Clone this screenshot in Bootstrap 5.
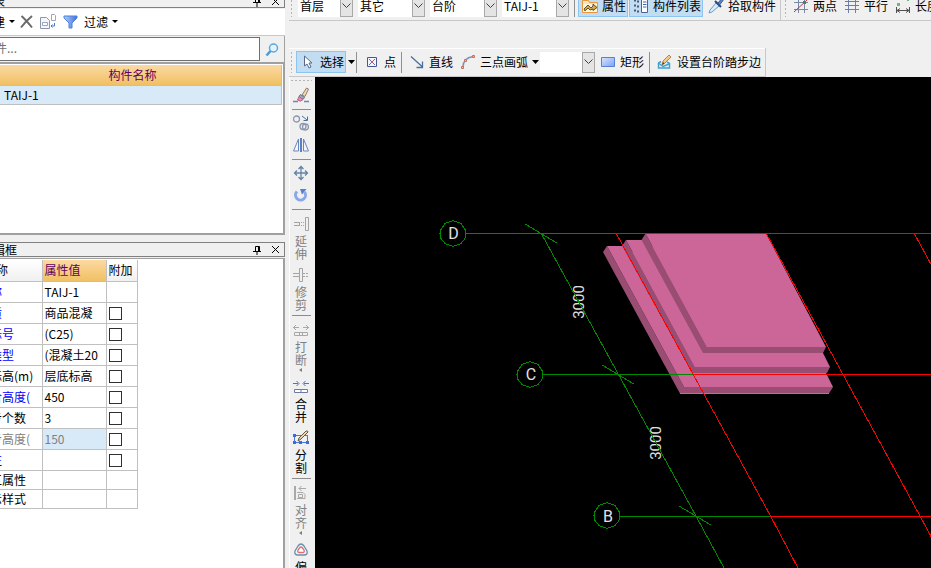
<!DOCTYPE html>
<html lang="zh-CN">
<head>
<meta charset="utf-8">
<meta name="viewport" content="width=device-width, initial-scale=1">
<title>TAIJ-1</title>
<link rel="stylesheet" href="https://cdn.jsdelivr.net/npm/bootstrap@5.3.0/dist/css/bootstrap.min.css">
<style>
  body { font: 12px/16px "Noto Sans CJK SC", "Liberation Sans", sans-serif; color: #000; background: #f0f0f0; }
  svg { display: block; flex: none; }
  button { font: inherit; color: inherit; border: 0; background: none; padding: 0; white-space: nowrap; }

  /* side panels */
  .side { width: 285px; }
  .titlebar { height: 15px; border: 1px solid #808080; border-left: 0; line-height: 13px; margin-top: 7px; }
  .titlebar.clipped-top { height: 8px; border-top: 0; margin-top: 0; }
  .titlebar .pane-tools { gap: 9px; padding-right: 4px; }
  .side-tools { height: 27px; background: #fff; border-bottom: 1px solid #c8c8c8; gap: 4px; margin-top: 1px; }
  .cut-left { margin-left: -7px; }
  .search-row { height: 26px; padding-top: 1px; border-right: 1px solid #a0a0a0; }
  .search-row input { flex: 1; min-width: 0; height: 24px; border: 1px solid #707070; border-left: 0; padding: 0 0 4px; text-indent: -5px; outline: 0; background: #fff; }
  .search-row input::placeholder { color: #707070; opacity: 1; }
  .search-row button { width: 24px; }
  .list-box { height: 173px; background: #fff; border: 2px solid #a0a0a0; border-left: 0; padding: 1px 0 0; }
  .grid-table { border-collapse: collapse; table-layout: fixed; background: #fff; }
  .parts { width: calc(100% - 1px); }
  .parts th { height: 20px; padding: 0 16px 0 0; text-align: center; font-weight: 400; color: #600060; background: linear-gradient(#fbd9a2, #f0c063); border-right: 1px solid #c0c0c0; }
  .parts td { height: 19px; padding: 0 0 0 4px; background: #d8eaf8; border: 1px solid #c0c0c0; border-left: 0; }
  .prop-box { background: #fff; border: 2px solid #a0a0a0; border-width: 1px 2px 0 0; margin-top: 1px; padding-top: 1px; min-height: 0; flex: 1; overflow: hidden; }
  .props { width: 137px; }
  .props th, .props td { height: 21px; padding: 0 0 0 2px; border: 1px solid #c0c0c0; font-weight: 400; line-height: 14px; white-space: nowrap; overflow: hidden; }
  .props tr > :first-child { border-left: 0; padding: 0; text-indent: -10px; }
  .props thead th { border-top: 0; background: linear-gradient(#fff, #f0f0f0); }
  .props thead th:first-child { text-indent: -4px; }
  .props thead th.picked { color: #600060; background: linear-gradient(#fbd9a2, #f0c063); }
  .props .short th, .props .short td { height: 19px; }
  .props .linked { color: #0000ff; }
  .props .locked { color: #808080; }
  .props td.locked { background: #d8eaf8; }
  .props input { display: block; appearance: none; width: 13px; height: 13px; margin: 1px 0 0; border: 1px solid #303030; background: #fff; }

  /* horizontal tool bars */
  .work { margin-left: 4px; }
  .bar { height: 29px; border: 1px solid #c8c8c8; border-width: 0 1px 1px 0; box-shadow: inset 0 1px #fff; white-space: nowrap; gap: 1px; padding-right: 2px; }
  .bars-top { margin-top: -8px; border-bottom: 1px solid #c8c8c8; overflow: hidden; height: 29px; }
  .bars-top .bar { border-bottom: 0; height: 28px; }
  .grip { width: 3px; height: 22px; margin: 0 2px 0 1px; background: radial-gradient(circle, #b4b4b4 1px, transparent 1px) 0 0 / 3px 4px; flex: none; }
  .bars-top .grip { margin: 0 4px 0 1px; }
  .bars-top .bar + .bar .grip { margin: 0 1px 0 3px; }
  .tool { display: flex; align-items: center; gap: 4px; height: 22px; padding: 0 2px 0 4px; flex: none; }
  .tool.on { background: #c2dcf2; box-shadow: inset 0 0 0 1px #8ec4f0; }
  .vsep { width: 1px; height: 21px; margin: 0 2px; background: #909090; flex: none; }
  .combo + .vsep, .caret + .vsep { margin-left: 0; }
  .caret { width: 8px; height: 22px; display: flex; align-items: center; justify-content: center; flex: none; }
  .combo { display: flex; width: 67px; height: 21px; margin-right: 4px; background: #fff; flex: none; }
  .combo.narrow { width: 55px; }
  .combo select { flex: 1; min-width: 0; appearance: none; border: 0; background: none; padding: 0 0 0 2px; font: inherit; outline: 0; color: #000; }
  .combo span { width: 13px; border: 1px solid #a8a8a8; background: #e4e4e4; display: flex; align-items: center; justify-content: center; }
  .bar-gap { height: 27px; }

  /* vertical tool bar */
  .rail { width: 26px; padding: 2px 3px 0 0; gap: 6px; border-left: 1px solid #fff; overflow: hidden; flex: none; }
  .rail-grip { width: 22px; height: 3px; margin-bottom: -1px; background: radial-gradient(circle, #b4b4b4 1px, transparent 1px) 0 0 / 4px 3px; flex: none; }
  .rail-sep { width: 19px; height: 1px; margin-bottom: -1px; background: #8c8c8c; flex: none; }
  .named + .rail-sep { margin-top: -2px; }
  .rail button { flex: none; }
  .named { display: flex; flex-direction: column; align-items: center; gap: 2px; padding-top: 1px; line-height: 13px; }
  .named span { width: 12px; white-space: normal; height: 26px; }
  .named.off { color: #808080; }
  .named .more { height: 4px; }
  .scene { background: #000; min-width: 0; overflow: hidden; }
  .scene text { font-family: Roboto, "Liberation Sans", sans-serif; font-size: 16px; fill: #e0e0e0; text-anchor: middle; }
  .scene .span-length { font-size: 15px; }
</style>
<script src="https://cdn.jsdelivr.net/npm/bootstrap@5.3.0/dist/js/bootstrap.bundle.min.js"></script>
</head>
<body class="vh-100 overflow-hidden d-flex">

<aside class="side d-flex flex-column flex-shrink-0 overflow-hidden">
  <div class="titlebar clipped-top d-flex align-items-end justify-content-between overflow-hidden">
    <span class="cut-left">表</span>
    <span class="pane-tools d-flex">
      <button aria-label="固定"><svg width="10" height="10" viewBox="0 0 10 10"><path d="M3.500 0v5M6.500 0v5M7.500 0v5M1 5.500h8M5 6v4" stroke="#000" fill="none"/></svg></button>
      <button aria-label="关闭"><svg width="9" height="10" viewBox="0 0 9 10"><path d="M1 1l7 7M8 1L1 8" stroke="#000" fill="none"/></svg></button>
    </span>
  </div>
  <div class="side-tools d-flex align-items-center">
    <button class="cut-left d-flex align-items-center gap-1">建<svg width="6" height="4"><path d="M0 0h6L3 3z"/></svg></button>
    <button aria-label="删除"><svg width="16" height="16" viewBox="0 0 16 16"><path d="M2.500 2Q7 6 13 13.500M13 2Q7 7 2 13.500" stroke="#6a6a6a" stroke-width="2" fill="none"/></svg></button>
    <button aria-label="复制"><svg width="18" height="16" viewBox="0 0 18 16"><path d="M1.500 3.500h6l3 3v8h-9z" fill="#f4f6fb" stroke="#8c96ac"/><path d="M3.500 8.500h5v3h-5zM12.500.5h3l1 1v5h-4z" fill="#fff" stroke="#9ba6bd"/><path d="M15.500 9v3h-3M13.500 10.500L12 12l1.500 1.500" stroke="#4a78d0" fill="none"/></svg></button>
    <button class="d-flex align-items-center gap-1"><svg width="19" height="16" viewBox="0 0 19 16"><defs><linearGradient id="fn"><stop stop-color="#b5cdfa"/><stop offset="1" stop-color="#3c72d8"/></linearGradient></defs><path d="M3 2h13v2l-5 5v5H8V9L3 4z" fill="url(#fn)" stroke="#4c80dd"/></svg>过滤<svg width="6" height="4"><path d="M0 0h6L3 3z"/></svg></button>
  </div>
  <div class="search-row d-flex">
    <input type="text" placeholder="件..." aria-label="件...">
    <button class="d-flex align-items-center justify-content-center" aria-label="搜索"><svg width="14" height="14" viewBox="0 0 14 14"><circle cx="8.500" cy="5" r="4" fill="#e4f4ff" stroke="#5aa8e0" stroke-width="1.500"/><path d="M5.500 8L1.500 12.500" stroke="#4a9ad8" stroke-width="2.500"/></svg></button>
  </div>
  <div class="list-box">
    <table class="grid-table parts">
      <thead><tr><th scope="col">构件名称</th></tr></thead>
      <tbody><tr><td>TAIJ-1</td></tr></tbody>
    </table>
  </div>
  <div class="titlebar d-flex align-items-center justify-content-between flex-shrink-0">
    <span class="cut-left">辑框</span>
    <span class="pane-tools d-flex">
      <button aria-label="固定"><svg width="10" height="10" viewBox="0 0 10 10"><path d="M3.500 6V1.500h4V6M6.500 1v5M1 6.500h8M5 7v3" stroke="#000" fill="none"/></svg></button>
      <button aria-label="关闭"><svg width="9" height="10" viewBox="0 0 9 10"><path d="M1 1l7 7M8 1L1 8" stroke="#000" fill="none"/></svg></button>
    </span>
  </div>
  <div class="prop-box">
    <table class="grid-table props">
      <colgroup><col style="width:42px"><col style="width:64px"><col style="width:31px"></colgroup>
      <thead><tr><th scope="col">称</th><th scope="col" class="picked">属性值</th><th scope="col">附加</th></tr></thead>
      <tbody>
        <tr><th scope="row" class="linked">称</th><td>TAIJ-1</td><td></td></tr>
        <tr><th scope="row" class="linked">质</th><td>商品混凝</td><td><input type="checkbox" aria-label="质"></td></tr>
        <tr><th scope="row" class="linked">标号</th><td>(C25)</td><td><input type="checkbox" aria-label="标号"></td></tr>
        <tr><th scope="row" class="linked">类型</th><td>(混凝土20</td><td><input type="checkbox" aria-label="类型"></td></tr>
        <tr><th scope="row">标高(m)</th><td>层底标高</td><td><input type="checkbox" aria-label="标高"></td></tr>
        <tr><th scope="row" class="linked">阶高度(</th><td>450</td><td><input type="checkbox" aria-label="阶高度"></td></tr>
        <tr><th scope="row">步个数</th><td>3</td><td><input type="checkbox" aria-label="步个数"></td></tr>
        <tr><th scope="row" class="locked">步高度(</th><td class="locked">150</td><td><input type="checkbox" aria-label="步高度"></td></tr>
        <tr><th scope="row" class="linked">注</th><td></td><td><input type="checkbox" aria-label="注"></td></tr>
        <tr class="short"><th scope="row">工属性</th><td></td><td></td></tr>
        <tr class="short"><th scope="row">示样式</th><td></td><td></td></tr>
      </tbody>
    </table>
  </div>
</aside>

<main class="work d-flex flex-column flex-grow-1 overflow-hidden">
  <div class="bars-top d-flex flex-shrink-0">
    <div class="bar d-flex align-items-center flex-shrink-0">
      <span class="grip"></span>
      <div class="combo narrow"><select aria-label="楼层"><option>首层</option></select><span><svg width="9" height="6"><path d="M.5.500l4 4 4-4" stroke="#404040" fill="none"/></svg></span></div>
      <div class="combo"><select aria-label="类别"><option>其它</option></select><span><svg width="9" height="6"><path d="M.5.500l4 4 4-4" stroke="#404040" fill="none"/></svg></span></div>
      <div class="combo"><select aria-label="构件类型"><option>台阶</option></select><span><svg width="9" height="6"><path d="M.5.500l4 4 4-4" stroke="#404040" fill="none"/></svg></span></div>
      <div class="combo"><select aria-label="构件"><option>TAIJ-1</option></select><span><svg width="9" height="6"><path d="M.5.500l4 4 4-4" stroke="#404040" fill="none"/></svg></span></div>
      <span class="vsep"></span>
      <button class="tool on"><svg width="16" height="16" viewBox="0 0 16 16"><path d="M.5 2.500h6l1 2h8v10H.5z" fill="#fbe4bb" stroke="#e8963a"/><path d="M1 6h14v8H1z" fill="#fff4dd"/><path d="M2 11l4-4 3 3 2-2v-2l4 3.500-4 3V11l-3 1-2-2-3 3z" fill="#d8a93c" stroke="#5c5038"/></svg>属性</button>
      <button class="tool on"><svg width="16" height="16" viewBox="0 0 16 16"><path d="M1 2.500h2M1 7.500h2M1 12.500h2M4 3.500h2M4 8.500h2M4 13.500h2" stroke="#4a5a78" stroke-width="2"/><path d="M8.500 1.500h6v13h-6z" fill="#fff" stroke="#4a6498"/><path d="M10 4h3.500M10 6.500h3.500M10 9h3.500" stroke="#3a68b0"/></svg>构件列表</button>
      <button class="tool"><svg width="16" height="16" viewBox="0 0 16 16"><path d="M8 5l3 3-7 6-3 1 1-3z" fill="#d8ecfa" stroke="#6a9cc8"/><path d="M7 3l6 6" stroke="#28487c" stroke-width="2"/><path d="M10 5l3-3.500q2-1 2 1L11.500 7z" fill="#5a86c0" stroke="#385c94"/></svg>拾取构件</button>
    </div>
    <div class="bar d-flex align-items-center flex-shrink-0 border-end-0">
      <span class="grip"></span>
      <button class="tool"><svg width="16" height="16" viewBox="0 0 16 16"><path d="M5.500 1v14M11.500 1v14M1 4.500h14M1 11.500h14" stroke="#7888a8"/><path d="M1 14L14 2" stroke="#c03838"/><path d="M10 3h3v3h-3z" fill="#488848"/></svg>两点</button>
      <button class="tool"><svg width="16" height="16" viewBox="0 0 16 16"><path d="M4.500 1v14M11.500 1v14M1 11.500h14" stroke="#7080a8"/><path d="M1 3.500h14M1 7.500h14" stroke="#c85868"/></svg>平行</button>
      <button class="tool"><svg width="16" height="16" viewBox="0 0 16 16"><path d="M2 5h3v3H2zM12 1h2v2h-2z" fill="#70b878"/><path d="M1.500 9v6M14.500 9v6M2 12.500h12M5 10.500l-3 2 3 2M11 10.500l3 2-3 2" stroke="#505050" fill="none"/></svg>长度</button>
    </div>
  </div>
  <div class="bar-gap flex-shrink-0"></div>
  <div class="d-flex flex-shrink-0">
    <div class="bar d-flex align-items-center">
      <span class="grip"></span>
      <button class="tool on"><svg width="16" height="16" viewBox="0 0 16 16"><path d="M4.500 2v10l2.500-2 2 4 2-1-2-4h3z" fill="#fff" stroke="#58688c"/></svg>选择</button>
      <button class="caret" aria-label="更多选择"><svg width="7" height="4"><path d="M0 0h7L3.500 4z"/></svg></button>
      <span class="vsep"></span>
      <button class="tool"><svg width="16" height="16" viewBox="0 0 16 16"><path d="M3.500 3.500h9v9h-9z" fill="#f4f6ff" stroke="#48588c"/><path d="M5 5l6 6M11 5l-6 6" stroke="#5870b8"/><path d="M7 7h2v2H7z" fill="#d05060"/></svg>点</button>
      <span class="vsep"></span>
      <button class="tool"><svg width="16" height="16" viewBox="0 0 16 16"><path d="M2 2.500l11 10M13.500 7.500v6h-6" stroke="#48709c" stroke-width="1.300" fill="none"/></svg>直线</button>
      <button class="tool"><svg width="16" height="16" viewBox="0 0 16 16"><path d="M3 13Q3 4 13 2.500" stroke="#7898b8" stroke-width="1.500" fill="none"/><g fill="#f4b8a0" stroke="#c87060"><path d="M1.500 12.500h2v2h-2zM4.500 5.500h2v2h-2zM12.500 1.500h2v2h-2z"/></g></svg>三点画弧</button>
      <button class="caret" aria-label="更多画弧"><svg width="7" height="4"><path d="M0 0h7L3.500 4z"/></svg></button>
      <div class="combo narrow me-0"><select aria-label="画弧方式"><option></option></select><span><svg width="9" height="6"><path d="M.5.500l4 4 4-4" stroke="#404040" fill="none"/></svg></span></div>
      <button class="tool"><svg width="16" height="16" viewBox="0 0 16 16"><defs><linearGradient id="rc" x2="1" y2="1"><stop stop-color="#d8e6ff"/><stop offset="1" stop-color="#7ca0f4"/></linearGradient></defs><path d="M1.500 3.500h13v9h-13z" fill="url(#rc)" stroke="#5a80d0"/></svg>矩形</button>
      <span class="vsep"></span>
      <button class="tool"><svg width="16" height="16" viewBox="0 0 16 16"><path d="M4 7.500L1.500 9v5h11V9.500L10 8" fill="#d8f2fc" stroke="#48a0cc" stroke-width="1.500"/><path d="M2 9.500l4 3 6-2.500" stroke="#48a0cc" stroke-width="1.500" fill="none"/><path d="M5 11l1-4 6-6 2 2-6 6z" fill="#f4c888" stroke="#b88848"/><path d="M5 11l1-3 1.500 1.500z" fill="#504030"/></svg>设置台阶踏步边</button>
    </div>
  </div>

  <div class="d-flex flex-grow-1 overflow-hidden">
    <div class="rail d-flex flex-column align-items-center">
      <span class="rail-grip"></span>
      <button aria-label="删除"><svg width="16" height="16" viewBox="0 0 16 16"><path d="M0 14.500h5M11 14.500h5" stroke="#6888b0" stroke-width="1.500"/><path d="M9 8l4.500-7 2 1L12 9.500z" fill="#f4d8a8" stroke="#8c8070"/><path d="M7.500 7.500l4 3-1.500 2-4-3z" fill="#9eacc0" stroke="#5c7090"/><path d="M6 9.500l4 3q-2 3-5.500.5z" fill="#e890b0" stroke="#c06080"/></svg></button>
      <span class="rail-sep"></span>
      <button aria-label="复制"><svg width="16" height="16" viewBox="0 0 16 16"><g fill="none" stroke="#8c98ac" stroke-width="1.300"><circle cx="3.500" cy="4" r="3"/><circle cx="10" cy="11.500" r="3"/><circle cx="12.500" cy="12" r="3"/></g><path d="M9 1l5 4M14.500 1.500v4h-4" stroke="#48709c" fill="none"/></svg></button>
      <button aria-label="镜像"><svg width="16" height="16" viewBox="0 0 16 16"><path d="M5.500 2v12h-5zM10.500 2v12h5z" fill="#f2f6ff" stroke="#6c86bc"/><path d="M7.500 1v14M8.500 1v14" stroke="#5a80c4"/></svg></button>
      <span class="rail-sep"></span>
      <button aria-label="移动"><svg width="16" height="16" viewBox="0 0 16 16"><path d="M8 2v12M2 8h12M5.500 4L8 1.500 10.500 4M5.500 12L8 14.500l2.500-2.500M4 5.500L1.500 8 4 10.500M12 5.500L14.500 8 12 10.500" stroke="#6484a4" stroke-width="1.300" fill="none"/></svg></button>
      <button aria-label="旋转"><svg width="16" height="16" viewBox="0 0 16 16"><path d="M4 4.500a5 5 0 1 0 7.500.5" stroke="#88a8e8" stroke-width="3" fill="none"/><path d="M7 2h6.500L9 7.500z" fill="#5880d0"/></svg></button>
      <span class="rail-sep"></span>
      <button class="named off"><svg width="16" height="16" viewBox="0 0 16 16"><path d="M12.500 1.500h3v13h-3zM1 6.500h6M1 9.500h6M6.500 7v3" stroke="#a4a4a4" fill="none"/><path d="M8 6.500h4M8 9.500h4" stroke="#a4a4a4" stroke-dasharray="1 1"/></svg><span>延伸</span></button>
      <button class="named off"><svg width="16" height="16" viewBox="0 0 16 16"><path d="M6.500 1.500h3v13h-3zM0 6.500h6M0 9.500h6" stroke="#a4a4a4" fill="none"/><path d="M10 6.500h5M10 9.500h5" stroke="#a4a4a4" stroke-dasharray="2 1"/></svg><span>修剪</span></button>
      <span class="rail-sep"></span>
      <button class="named off"><svg width="16" height="16" viewBox="0 0 16 16"><path d="M0 5.500h6M10 5.500h6M3 3L.5 5.500 3 8M13 3l2.500 2.500L13 8M1.500 10.500h13v3h-13zM6.500 11v3M9.500 11v3" stroke="#a8a8a8" fill="none"/></svg><span>打断</span><svg class="more" width="4" height="4"><path d="M3 0v4L0 2z" fill="#808080"/></svg></button>
      <button class="named"><svg width="16" height="16" viewBox="0 0 16 16"><path d="M0 4.500h5M11 4.500h5M3.500 2L6 4.500 3.500 7M12.500 2L10 4.500 12.500 7" stroke="#4878b8" fill="none"/><path d="M1.500 10.500h13v3h-13zM8 11v3" stroke="#6c7ca0" fill="#fff"/></svg><span>合并</span></button>
      <button class="named"><svg width="16" height="16" viewBox="0 0 16 16"><path d="M1 5.500h14M1 12.500h14M1.500 5v8M14.500 5v8" stroke="#4878d8"/><path d="M0 4h3v3H0zM0 11h3v3H0zM13 11h3v3h-3zM6 11h3v3H6z" fill="#4068d8"/><path d="M5 11l1-3 7-7q2-.5 2 1L8 9z" fill="#f0d8a8" stroke="#685848"/></svg><span>分割</span></button>
      <span class="rail-sep"></span>
      <button class="named off"><svg width="16" height="16" viewBox="0 0 16 16"><path d="M2 1v14" stroke="#a8a8a8" stroke-width="2"/><path d="M4 7.500h6l2 2v4H4M5.500 9.500h4v3h-4zM6 3.500h7M8.500 1L6 3.500 8.500 6" stroke="#a8a8a8" fill="none"/></svg><span>对齐</span><svg class="more" width="4" height="4"><path d="M3 0v4L0 2z" fill="#808080"/></svg></button>
      <button class="named"><svg width="16" height="16" viewBox="0 0 16 16"><path d="M5 4q3-4 6 0l3 5q1 4-3 4H5q-4 0-3-4z" fill="#f0f6fc" stroke="#6c8cac" stroke-width="1.300"/><path d="M6.500 6q1.500-2 3 0l1.500 2q1 2.500-1.500 2.500h-3Q4 10.500 5 8z" fill="#fff" stroke="#e07070" stroke-width="1.300"/></svg><span>偏</span></button>
    </div>

    <div class="scene flex-grow-1">
      <svg width="100%" height="100%" viewBox="315 77 616 491" preserveAspectRatio="xMinYMin slice" role="img" aria-label="台阶">
        <!-- three stacked steps, lowest first -->
        <g fill="#994d73">
          <path d="M603 252l4-6 77 141h149l-4 6.500H680z"/>
          <path fill="#cc6699" d="M607 246h16l203 127 7 14H684z"/>
          <path d="M622 246l4-6 69 127h135l-3 6H692z"/>
          <path fill="#cc6699" d="M626 240h16l181 113 7 14H695z"/>
          <path d="M641.500 240l4-6.500L707 347h119l-3 6H703z"/>
          <path fill="#cc6699" d="M645.500 233.500H766L826 347H707z"/>
        </g>
        <path d="M680 393.500h149" stroke="#cc6699" fill="none"/>
        <g>
          <text x="453.500" y="239">D</text>
          <text x="531" y="380">C</text>
          <text x="608" y="522">B</text>
          <text class="span-length" transform="translate(584 302) rotate(-90)">3000</text>
          <text class="span-length" transform="translate(661 443) rotate(-90)">3000</text>
        </g>
        <g stroke="#008a00" fill="none" shape-rendering="crispEdges">
          <path d="M466 233.500h150M543 374.500h150M620 516.500h150"/>
          <path d="M541 233l155.500 284L724 568M525 224l32 19M602 365l32 19M679 506l32 19"/>
          <path id="axis" d="M453 220.500l8 3 4 6 1 4-1 5-4 5-8 3-8-3-4-5-1-5 1-4 4-6z"/>
          <use href="#axis" x="77" y="141"/>
          <use href="#axis" x="154" y="282"/>
        </g>
        <g stroke="#f00" fill="none" shape-rendering="crispEdges">
          <path d="M616 233.500h1400M693 374.500h1400M770 516.500h1400"/>
          <path d="M616 233l154.500 283L798 568M766 233l154 283 28 52M914 233l182 335"/>
        </g>
      </svg>
    </div>
  </div>
</main>
</body>
</html>
